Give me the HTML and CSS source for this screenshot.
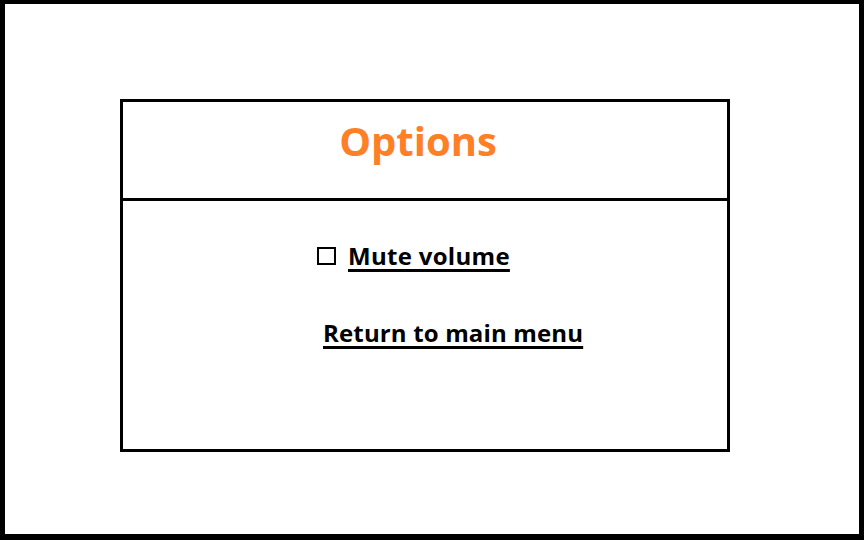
FILE: index.html
```html
<!DOCTYPE html>
<html lang="en">
<head>
  <meta charset="UTF-8" />
  <title>Options</title>
  <link rel="stylesheet" href="styles.css">
</head>
<body>
  <div class="frame">
    <div class="panel">
      <div class="panel-head">
        <h1>Options</h1>
      </div>
      <div class="panel-body">
        <label class="option">
          <span class="box"></span>
          <a href="#">Mute volume</a>
        </label>
        <a href="#" class="back-link">Return to main menu</a>
      </div>
    </div>
  </div>
</body>
</html>
```

FILE: styles.css
```css
body {
  margin: 0;
  padding: 0;
  background: #fff;
  font-family: "Open Sans", Lato, sans-serif;
}

.frame {
  width: 864px;
  height: 540px;
  box-sizing: border-box;
  border-style: solid;
  border-color: #000;
  border-width: 4px 5px 6px 5px;
  padding: 95px 0 0 115px;
}

.panel {
  width: 610px;
  height: 353px;
  box-sizing: border-box;
  border: 3px solid #000;
}

.panel-head {
  height: 99px;
  box-sizing: border-box;
  border-bottom: 3px solid #000;
  padding: 14px 14px 0 0;
}

h1 {
  margin: 0;
  color: #ff7f27;
  font-size: 40px;
  line-height: 50px;
  font-weight: bold;
  text-align: center;
}

.panel-body {
  padding: 41px 0 0 194px;
}

.option {
  display: flex;
  align-items: center;
  gap: 12px;
}

.box {
  width: 15px;
  height: 14px;
  border: 2px solid #000;
  margin-top: 0;
}

.option a,
.back-link {
  color: #000;
  font-weight: bold;
  font-size: 24px;
  line-height: 28px;
  text-decoration: underline;
  text-decoration-thickness: 3px;
  text-underline-offset: 4px;
}

.option a {
  letter-spacing: 0.3px;
}

.back-link {
  display: inline-block;
  margin: 49px 0 0 6px;
  letter-spacing: 0.15px;
}
```
